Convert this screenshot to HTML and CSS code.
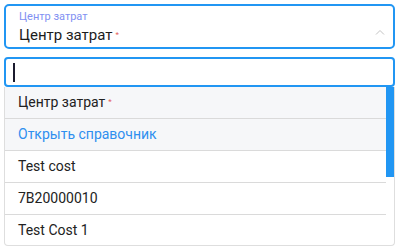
FILE: index.html
```html
<!DOCTYPE html>
<html lang="ru">
<head>
  <meta charset="UTF-8">
  <title>Центр затрат</title>
  <link rel="stylesheet" href="styles.css">
</head>
<body>
  <div class="picker">
    <div class="field">
      <div class="field-text">
        <div class="field-label">Центр затрат</div>
        <div class="field-value">Центр затрат<span class="req">*</span></div>
      </div>
      <svg class="chevron" width="10" height="6" viewBox="0 0 10 6">
        <path d="M1 5.5 L5 1.5 L9 5.5" fill="none" stroke="#c2c2c2" stroke-width="1"/>
      </svg>
    </div>

    <div class="search">
      <span class="caret"></span>
    </div>

    <div class="list">
      <div class="rows">
        <div class="row shaded">Центр затрат<span class="req">*</span></div>
        <div class="row shaded link">Открыть справочник</div>
        <div class="row">Test cost</div>
        <div class="row">7B20000010</div>
        <div class="row">Test Cost 1</div>
      </div>
      <div class="scroll">
        <div class="thumb"></div>
      </div>
    </div>
  </div>
</body>
</html>
```

FILE: styles.css
```css
body {
  margin: 0;
  padding: 4px 5px 0 4px;
  font-family: Roboto, "Liberation Sans", sans-serif;
  background: #fff;
  color: #222;
}

.field {
  display: flex;
  align-items: center;
  justify-content: space-between;
  height: 41px;
  padding: 0 8px 0 13px;
  border: 2px solid #2196f3;
  border-radius: 5px;
}

.field-label {
  font-size: 11px;
  line-height: 13px;
  color: #8190f2;
  margin-top: 1px;
}

.field-value {
  font-size: 15px;
  line-height: 20px;
  color: #1c1c1c;
  margin-top: 2px;
}

.req {
  color: #e45a5a;
  font-size: 8px;
  margin-left: 3px;
  vertical-align: 3px;
}

.chevron {
  margin-top: 10px;
}

.search {
  display: flex;
  align-items: center;
  height: 26px;
  margin-top: 8px;
  padding: 0 7px;
  border: 2px solid #2196f3;
  border-radius: 4px;
}

.caret {
  width: 1.5px;
  height: 19px;
  background: #1b1b2e;
}

.list {
  display: flex;
  height: 158px;
  border: 1px solid #dedede;
  border-top: none;
  border-radius: 0 0 4px 4px;
}

.rows {
  flex: 1;
}

.row {
  height: 31px;
  line-height: 30px;
  padding-left: 13px;
  font-size: 14px;
  color: #222;
  border-bottom: 1px solid #dadada;
}

.row.shaded {
  background: #f6f7f9;
}

.row.link {
  color: #2f8fef;
}

.scroll {
  width: 8px;
}

.thumb {
  height: 90px;
  background: #2196f3;
}
```
